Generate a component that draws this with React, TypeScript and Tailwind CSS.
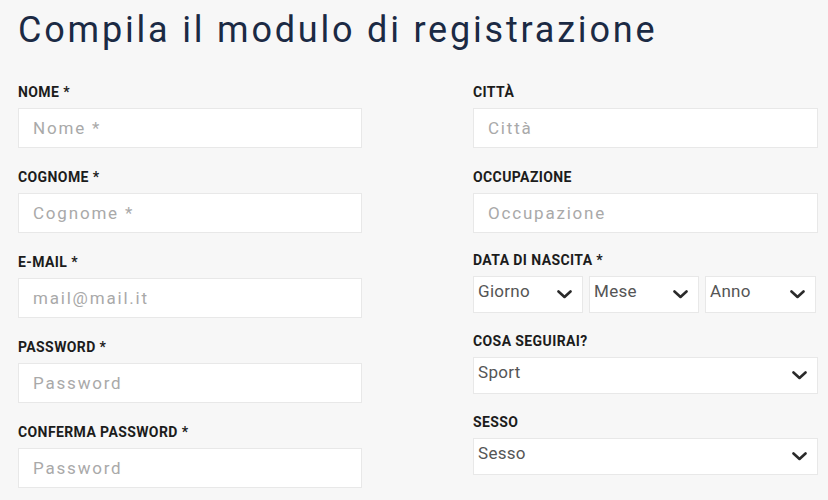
const LEFT = [
  { label: "NOME *", placeholder: "Nome *" },
  { label: "COGNOME *", placeholder: "Cognome *" },
  { label: "E-MAIL *", placeholder: "mail@mail.it" },
  { label: "PASSWORD *", placeholder: "Password" },
  { label: "CONFERMA PASSWORD *", placeholder: "Password" },
];

const RIGHT = [
  { label: "CITTÀ", placeholder: "Città" },
  { label: "OCCUPAZIONE", placeholder: "Occupazione" },
];

function Chevron() {
  return (
    <svg className="h-[9px] w-[15px] shrink-0" viewBox="0 0 15 9" fill="none" stroke="#2a2a2a" strokeWidth={2.6}>
      <path d="M1.5 1.5l6 5.5 6-5.5" strokeLinecap="round" strokeLinejoin="round" />
    </svg>
  );
}

function Label({ children }: { children: string }) {
  return <div className="h-5 text-[14px] font-bold leading-5 tracking-[0.4px] text-[#1c1c1c]">{children}</div>;
}

function TextField({ label, placeholder }: { label: string; placeholder: string }) {
  return (
    <div className="flex flex-col">
      <Label>{label}</Label>
      <input
        type="text"
        placeholder={placeholder}
        className="mt-[6px] h-[40px] w-full border border-[#e8e8e8] bg-white px-[14px] text-[17px] tracking-[1.8px] text-[#555] outline-none placeholder:text-[#a9a9a9]"
      />
    </div>
  );
}

function Select({ value, className }: { value: string; className?: string }) {
  return (
    <div
      className={`flex h-[37px] items-center justify-between border border-[#e8e8e8] bg-white pl-[4px] pr-[10px] ${className ?? ""}`}
    >
      <span className="-mt-[5px] text-[17px] tracking-[0.3px] text-[#555]">{value}</span>
      <Chevron />
    </div>
  );
}

export default function App() {
  return (
    <div className="min-h-[500px] w-[828px] bg-[#f7f7f7] px-[18px] font-['Roboto',sans-serif]">
      <h1 className="pt-[5px] text-[36px] leading-[50px] font-normal tracking-[2.8px] text-[#1b2a44]">
        Compila il modulo di registrazione
      </h1>

      <div className="mt-[27px] grid grid-cols-[344px_345px] gap-x-[111px]">
        <div className="flex flex-col gap-[19px]">
          {LEFT.map((f) => (
            <TextField key={f.label} {...f} />
          ))}
        </div>

        <div className="flex flex-col">
          <div className="flex flex-col gap-[19px]">
            {RIGHT.map((f) => (
              <TextField key={f.label} {...f} />
            ))}
          </div>

          <div className="mt-[17px] flex flex-col">
            <Label>DATA DI NASCITA *</Label>
            <div className="mt-[6px] flex gap-[6px]">
              <Select value="Giorno" className="w-[110px]" />
              <Select value="Mese" className="w-[110px]" />
              <Select value="Anno" className="w-[111px]" />
            </div>
          </div>

          <div className="mt-[18px] flex flex-col">
            <Label>COSA SEGUIRAI?</Label>
            <Select value="Sport" className="mt-[6px]" />
          </div>

          <div className="mt-[18px] flex flex-col">
            <Label>SESSO</Label>
            <Select value="Sesso" className="mt-[6px]" />
          </div>
        </div>
      </div>
    </div>
  );
}
